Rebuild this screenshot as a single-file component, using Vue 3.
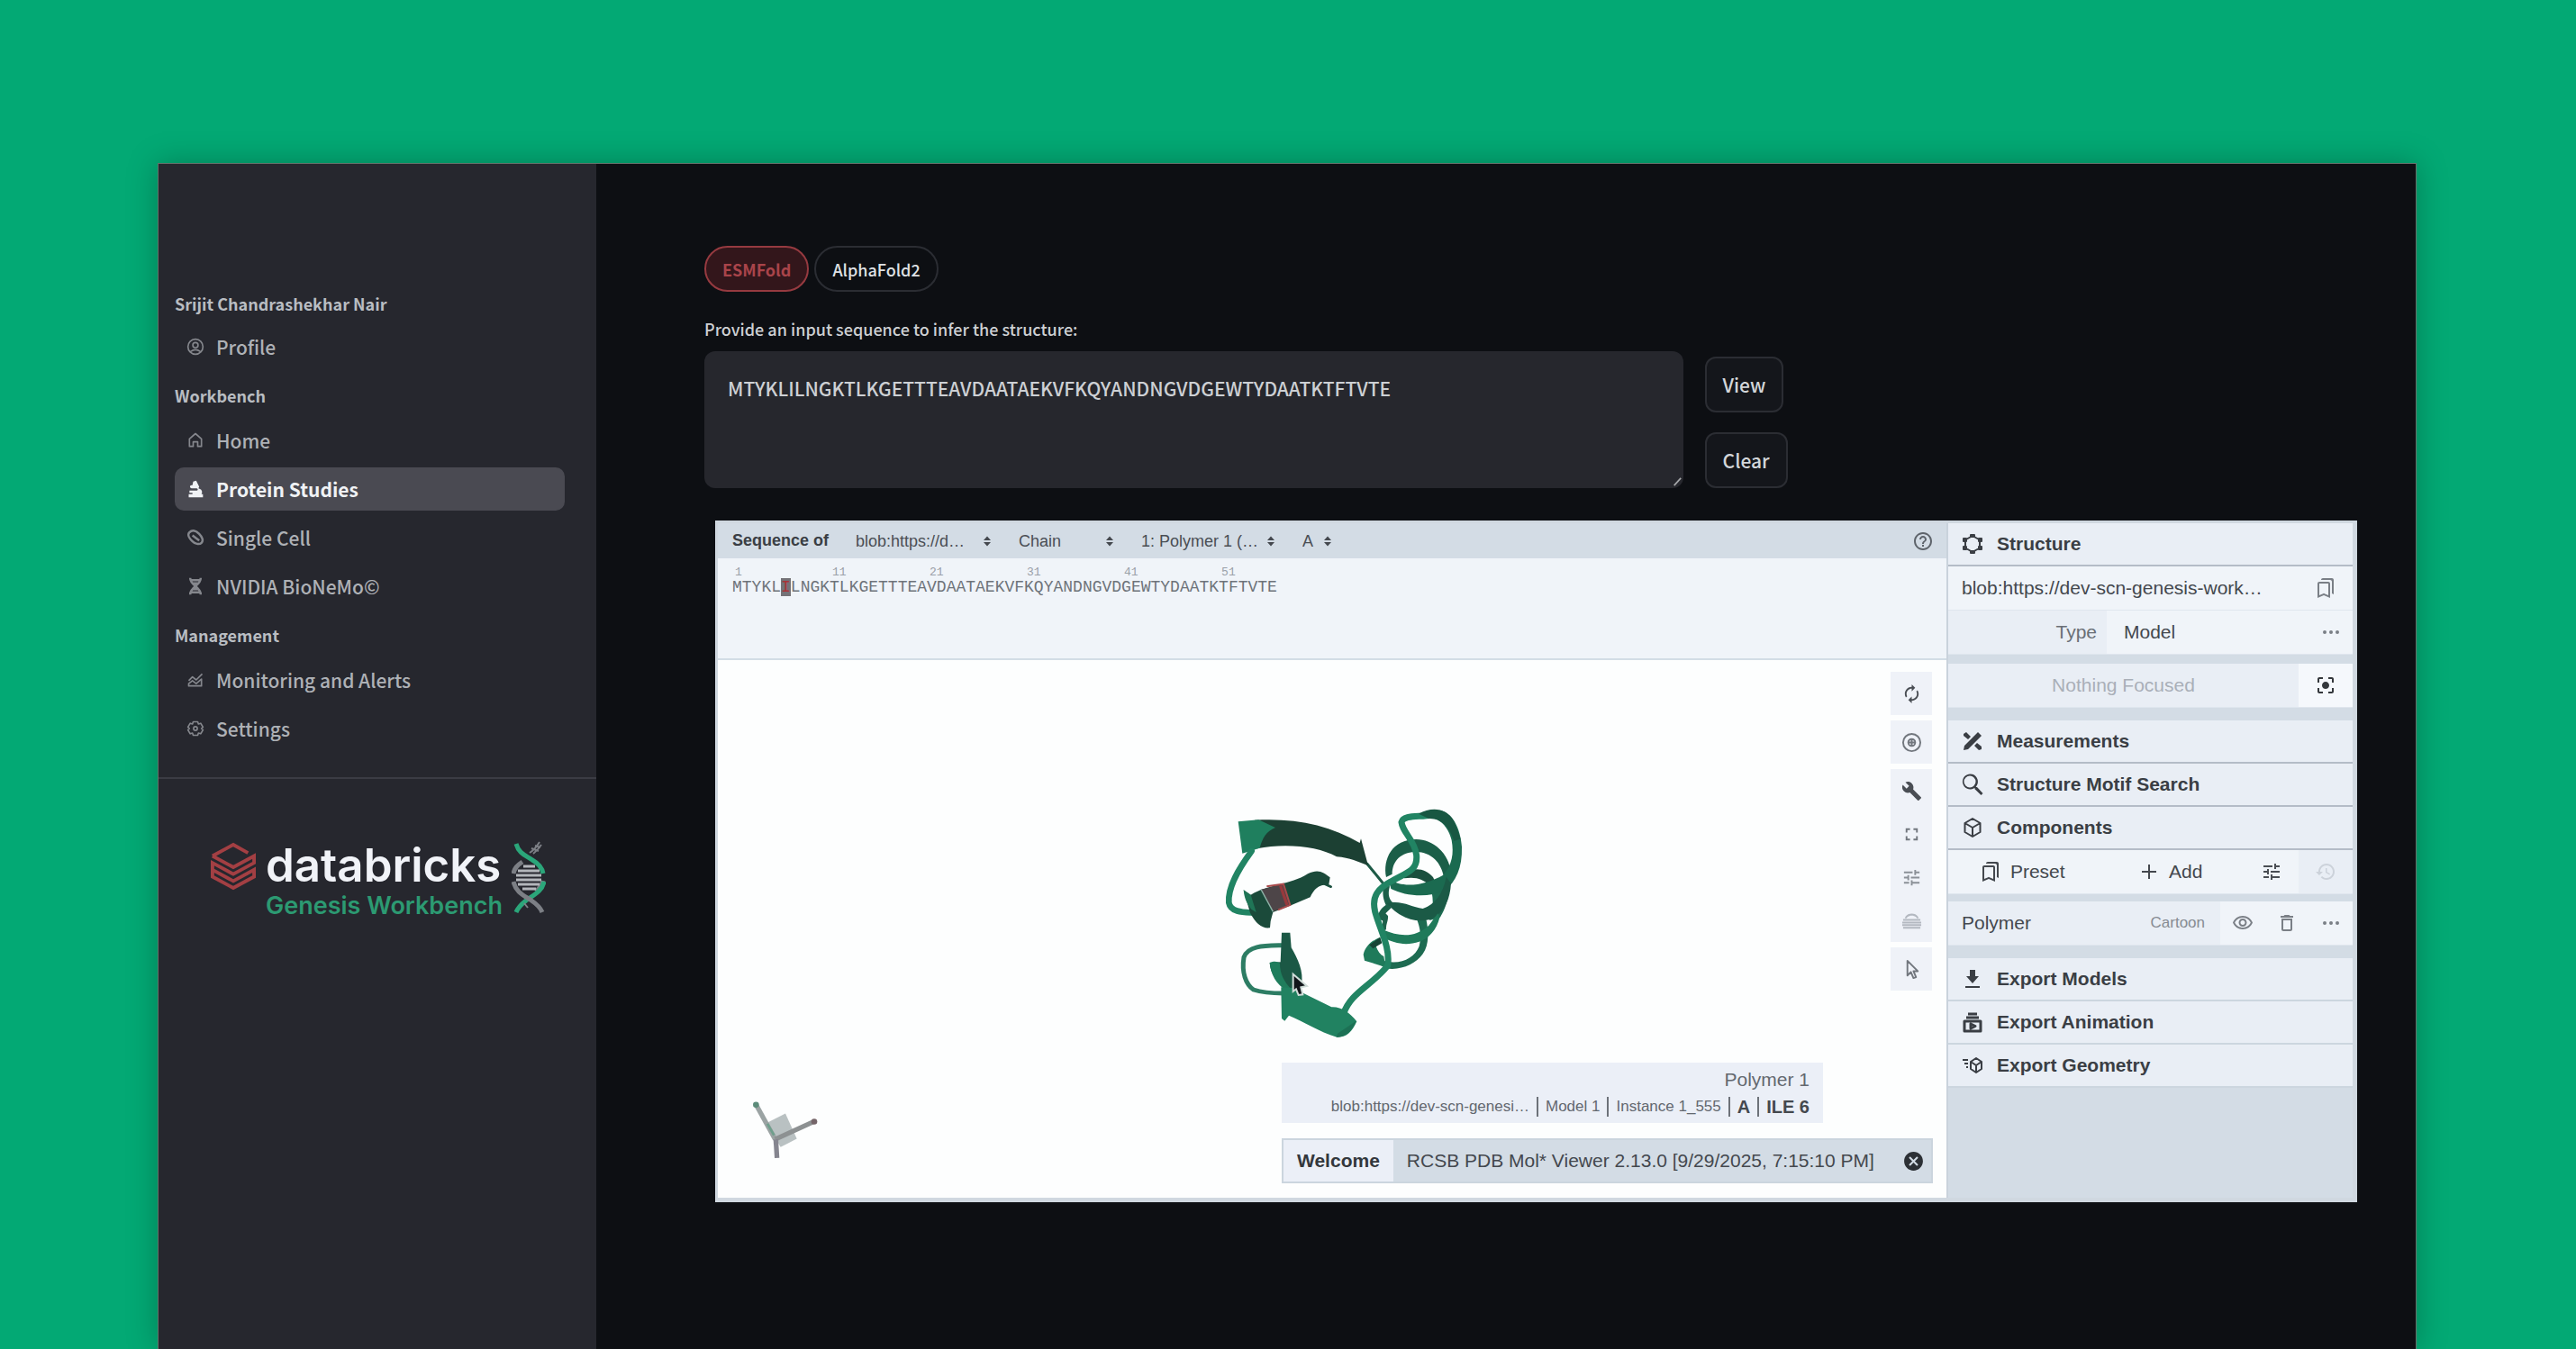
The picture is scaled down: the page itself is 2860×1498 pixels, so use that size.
<template>
    <div class="page">
        <div class="window">
            <aside class="sidebar">
                <nav>
                    <div class="group" v-for="group in menu" :key="group.title">
                        <h2>{{ group.title }}</h2>
                        <a
                            v-for="item in group.items"
                            :key="item.label"
                            href="#"
                            :class="{ active: item.label === current }"
                            @click.prevent="current = item.label"
                        >
                            <Icon :name="item.icon" class="nav-icon" />
                            {{ item.label }}
                        </a>
                    </div>
                </nav>

                <div class="brand">
                    <svg class="bricks" viewBox="0 0 52 56" aria-hidden="true">
                        <path d="M2 16 26 3l17 9.500M2 16l24 13 24-13v8L26 37 2 24v8l24 13 24-13v8L26 53 2 40v-8" />
                    </svg>
                    <div class="brand-text">
                        <span class="brand-name">databricks</span>
                        <span class="brand-sub">Genesis Workbench</span>
                    </div>
                    <svg class="dna" viewBox="0 0 38 82" aria-hidden="true">
                        <path class="gray" d="M12 24C6 28 3 31 2 37M35 45c-1 5-4 8-8 12" />
                        <path class="green" d="M5 4c3 11 11 13 18 18 7 4 11 9 12 15M36 46c-2 11-12 15-20 21-5 4-9 8-11 13" />
                        <path class="gray" d="M2 46c3 12 11 15 20 21 6 4 10 8 12 13" />
                        <path class="rungs" d="M13 29h13M7 34h24M5 39h28M5 44h28M7 49h24M12 54h15" />
                        <path class="thin" d="M20 14c5-3 8-7 11-12M24 15c4-3 7-7 9-10M22 9l8 3M26 6l6 2M14 70l4 5" />
                    </svg>
                </div>
            </aside>

            <main>
                <div class="tabs">
                    <button
                        v-for="m in models"
                        :key="m"
                        type="button"
                        :class="{ picked: m === model }"
                        @click="model = m"
                    >{{ m }}</button>
                </div>

                <label class="seq-label" for="seq">Provide an input sequence to infer the structure:</label>
                <div class="form">
                    <div class="box">
                        <textarea id="seq" v-model="sequence" spellcheck="false"></textarea>
                        <svg class="grip" viewBox="0 0 12 12" aria-hidden="true"><path d="M2 11 11 1" /></svg>
                    </div>
                    <div class="form-buttons">
                        <button type="button">View</button>
                        <button type="button" @click="sequence = ''">Clear</button>
                    </div>
                </div>

                <section class="viewer">
                    <div class="stage">
                        <div class="seq-bar">
                            <strong>Sequence of</strong>
                            <label class="pick" v-for="p in pickers" :key="p.text" :style="{ width: p.width + 'px' }">
                                <select :aria-label="p.name">
                                    <option>{{ p.text }}</option>
                                </select>
                                <Icon name="unfold" class="unfold" />
                            </label>
                            <button type="button" class="help" aria-label="Help"><Icon name="help" /></button>
                        </div>

                        <div class="residues">
                            <div class="ticks">
                                <span v-for="n in [1, 11, 21, 31, 41, 51]" :key="n"><small>{{ n }}</small></span>
                            </div>
                            <div class="letters">{{ chain.slice(0, 5) }}<mark>{{ chain[5] }}</mark>{{ chain.slice(6) }}</div>
                        </div>

                        <div class="canvas">
                            <!-- cartoon of the folded chain -->
                            <svg class="protein" viewBox="0 0 1020 960" aria-hidden="true">
                                <!-- helix, back to front -->
                                <path fill="#1a4f3e" d="M720 335c30-26 70-20 96 10l16 34-28-6c-20-22-46-30-84-24z" />
                                <path fill="#1d6b51" d="M812 395l54-26c4 40-6 80-28 112l-34 8c12-30 14-60 8-94z" />
                                <path fill="#1d6b51" d="M762 485l30-4c10 40 12 90-10 120-24 34-74 56-122 48l-24-14 6-14c60 20 112-4 128-46 8-30 4-60-8-90z" />
                                <path fill="#1c6049" d="M652 372l20 4c-8 28-2 44 14 58l-22 12c-14-22-18-46-12-74z" />
                                <path fill="#1c6049" d="M664 434c-20 12-32 30-34 50l18 6c2 10-4 22 0 34l12-4c-2-18 8-30 6-46l-8-8 20-20z" />
                                <path fill="#1b5e48" d="M660 345c-12-60 20-126 100-126 56 0 110 46 116 112l-24 14c-8-48-42-84-92-84-50 0-80 30-80 74z" />
                                <path fill="#1b6a50" d="M668 352c50 32 120 20 182-14 30-34 36-72 28-116-8-32-24-56-50-70l8-30c44 6 72 60 76 122 2 70-20 118-58 146-56 26-130 18-178-6z" />
                                <path fill="#1b5a46" d="M662 432c50-12 80 12 120 18 40-14 68-50 78-106l16 22c-4 60-26 102-70 120-54 14-106-10-144-54z" />
                                <path fill="#1f7a5a" d="M648 520c60 26 110 26 154-14l30-40 6 14c-10 40-34 68-68 80-40 14-84 8-122-16z" />
                                <path fill="#1f7a5a" d="M640 545c-24 10-48 26-56 58l4 20 70 22-6-36c-12-6-20-18-26-34z" />
                                <path fill="#164435" d="M640 545l-36 26 12 12 30-18z" />
                                <g class="cord">
                                    <path class="c-thin" stroke-width="9" d="M596 300l54 66" />
                                    <path class="c-lite" stroke-width="21" d="M518 800c24-70 92-92 147-160 10-60-26-120-42-180-12-50 8-78 60-104 50-28 82-34 78-84-6-52-46-74-50-110 6-26 60-16 100-24" />
                                </g>
                                <path fill="#185742" d="M768 134c44-24 92-20 118 24l22 60-22 6c-18-52-46-76-84-74z" />

                                <!-- strands -->
                                <path fill="#1c4033" d="M222 155c130-8 250 16 350 76l4-14 24 90c-34-14-60-26-105-30-60-34-170-46-265-27z" />
                                <path fill="#1f7f5e" d="M167 160l68-6 56 26c-30 12-44 36-52 68l-58 18z" />
                                <g class="cord">
                                    <path class="c-lite" stroke-width="20" d="M212 258c-44 60-80 120-76 172 6 34 54 32 84 34" />
                                    <path class="c-dark" stroke-width="8" d="M450 365l26 12" />
                                </g>
                                <path fill="#1b4a3a" d="M185 388l24 16c60-36 130-32 190-70 36-18 52-4 74 12l-4 24c-38 0-50 18-62 42l-62 26-62 24-8 30-2 22c-30 4-50-20-66-50z" />
                                <path fill="#1f7556" d="M185 388l24 16 18 58-16-10c-18-20-24-42-26-64z" />
                                <path fill="#4d4548" d="M243 386l76-18 22 70-58 22z" />
                                <path fill="none" stroke="#a84a4b" stroke-width="6" d="M262 376l56-8 22 70-40 16" />
                                <path fill="none" stroke="#98393c" stroke-width="10" d="M308 374l22 64" />
                                <path fill="none" stroke="#8fb3a8" stroke-width="4" d="M243 386l40 74" />

                                <g class="cord">
                                    <path class="c-loop" stroke-width="15" d="M322 572c-60 2-120-2-136 40-8 50 6 90 32 108 30 10 60 12 100 12" />
                                </g>
                                <path fill="#1b5845" d="M312 530h28l4 50c22 38 42 80 34 122l-40 16c-44-20-64-52-66-88l36-2z" />
                                <path fill="#1f7d5c" d="M272 630c16-6 26-4 34 2 0 36 14 60 36 84l-12 8c-38-22-54-56-58-94z" />
                                <path fill="#218261" d="M310 712l38 2 130 64c32-2 60 18 84 48-16 36-36 54-66 52-60-18-110-52-160-72l-14 18-10-8z" />
                                <path fill="#1c7054" d="M498 866l62-42c-16 36-36 54-66 54z" />

                                <path fill="#11151a" stroke="#cfdcd8" stroke-width="6" d="M350 668l46 40-20 4 6 24-14 2-8-20-10 8z" />
                            </svg>

                            <!-- orientation axes -->
                            <svg class="axes" viewBox="0 0 240 230" aria-hidden="true">
                                <path fill="#b9c1c2" d="M62 72l64-32 38 84-54 28z" />
                                <path stroke="#9ba3a3" d="M30 14l62 112" />
                                <path stroke="#6f9f8c" stroke-width="8" d="M66 74l22 38" />
                                <path stroke="#8d9192" d="M92 126l126-58" />
                                <path stroke="#85858f" d="M94 126l4 62" />
                                <circle fill="#5c8c7a" cx="28" cy="11" r="10" />
                                <circle fill="#756569" cx="222" cy="67" r="10" />
                            </svg>

                            <div class="tools">
                                <div class="tool-group" v-for="(set, i) in tools" :key="i">
                                    <button
                                        v-for="t in set"
                                        :key="t.icon"
                                        type="button"
                                        :class="t.tone"
                                        :aria-label="t.name"
                                    ><Icon :name="t.icon" /></button>
                                </div>
                            </div>

                            <div class="overlay">
                                <div class="info">
                                    <p>Polymer 1</p>
                                    <p class="path">
                                        <span>blob:https://dev-scn-genesi…</span><i></i>
                                        <span>Model 1</span><i></i>
                                        <span>Instance 1_555</span><i></i>
                                        <b>A</b><i></i>
                                        <b>ILE 6</b>
                                    </p>
                                </div>
                                <div class="toast">
                                    <strong>Welcome</strong>
                                    <span>RCSB PDB Mol* Viewer 2.13.0 [9/29/2025, 7:15:10 PM]</span>
                                    <button type="button" aria-label="Close"><Icon name="cancel" /></button>
                                </div>
                            </div>
                        </div>
                    </div>

                    <div class="panel">
                        <h3><Icon name="structure" />Structure</h3>
                        <div class="row light">
                            <span class="grow">blob:https://dev-scn-genesis-work…</span>
                            <button type="button" class="cell wide" aria-label="Presets"><Icon name="bookmarks" /></button>
                        </div>
                        <div class="row light">
                            <span class="type">Type</span>
                            <span class="grow">Model</span>
                            <button type="button" class="cell" aria-label="More"><Icon name="more" /></button>
                        </div>
                        <div class="row focus">
                            <span class="none">Nothing Focused</span>
                            <button type="button" class="cell wide strong" aria-label="Focus"><Icon name="focus" /></button>
                        </div>

                        <h3 class="first"><Icon name="measure" />Measurements</h3>
                        <h3><Icon name="search" />Structure Motif Search</h3>
                        <h3><Icon name="cube" />Components</h3>
                        <div class="row light actions">
                            <button type="button" class="text-button"><Icon name="bookmarks" />Preset</button>
                            <button type="button" class="text-button"><Icon name="plus" />Add</button>
                            <button type="button" class="cell wide dark" aria-label="Options"><Icon name="tune" /></button>
                            <button type="button" class="cell wide off" aria-label="Undo" disabled><Icon name="history" /></button>
                        </div>
                        <div class="row polymer">
                            <span class="grow">Polymer</span>
                            <span class="repr">Cartoon</span>
                            <button type="button" class="cell" aria-label="Hide"><Icon name="eye" /></button>
                            <button type="button" class="cell" aria-label="Remove"><Icon name="bin" /></button>
                            <button type="button" class="cell" aria-label="More"><Icon name="more" /></button>
                        </div>

                        <h3 class="first pale"><Icon name="download" />Export Models</h3>
                        <h3 class="pale"><Icon name="film" />Export Animation</h3>
                        <h3 class="pale"><Icon name="geometry" />Export Geometry</h3>
                    </div>
                </section>
            </main>
        </div>
    </div>
</template>

<script setup>
    import { ref, h } from 'vue'

    const chain = 'MTYKLILNGKTLKGETTTEAVDAATAEKVFKQYANDNGVDGEWTYDAATKTFTVTE'

    const current = ref('Protein Studies')
    const model = ref('ESMFold')
    const sequence = ref(chain)
    const models = ['ESMFold', 'AlphaFold2']

    const menu = [
        { title: 'Srijit Chandrashekhar Nair', items: [{ label: 'Profile', icon: 'user' }] },
        {
            title: 'Workbench',
            items: [
                { label: 'Home', icon: 'home' },
                { label: 'Protein Studies', icon: 'microscope' },
                { label: 'Single Cell', icon: 'cell' },
                { label: 'NVIDIA BioNeMo©', icon: 'helix' },
            ],
        },
        {
            title: 'Management',
            items: [
                { label: 'Monitoring and Alerts', icon: 'chart' },
                { label: 'Settings', icon: 'gear' },
            ],
        },
    ]

    const pickers = [
        { name: 'Structure', text: 'blob:https://d…', width: 155 },
        { name: 'Mode', text: 'Chain', width: 110 },
        { name: 'Entity', text: '1: Polymer 1 (…', width: 153 },
        { name: 'Chain', text: 'A', width: 37 },
    ]

    const tools = [
        [{ icon: 'reset', name: 'Reset camera' }],
        [{ icon: 'camera', name: 'Screenshot', tone: 'mid' }],
        [
            { icon: 'wrench', name: 'Controls' },
            { icon: 'expand', name: 'Expand', tone: 'mid' },
            { icon: 'tune', name: 'Settings', tone: 'soft' },
            { icon: 'drive', name: 'Illumination', tone: 'faint' },
        ],
        [{ icon: 'cursor', name: 'Selection mode', tone: 'mid' }],
    ]

    // "line" icons are stroked, the others are filled
    const icons = {
        user: { line: 2, d: 'M12 2a10 10 0 1 0 0 20 10 10 0 0 0 0-20M12 6.500a3.500 3.500 0 1 0 0 7 3.500 3.500 0 0 0 0-7M5.500 18.500c4-3 9-3 13 0' },
        home: { line: 2, d: 'M4 10v10h5v-6h6v6h5V10l-8-7z' },
        microscope: { d: 'M9 2l4-1 4 8-1 2c4 1 6 4 4 8h2v4H3v-4h5v-2H4v-3h10c2-1 1-3-1-3H7c-3 0-3-4 0-4h1z' },
        cell: { line: 3, d: 'M4 5c4-4 9-2 13 2s6 9 3 12-9 1-12-2-8-8-4-12M8 9l9 7' },
        helix: { line: 3, d: 'M5 1c0 11 14 11 14 22M19 1c0 11-14 11-14 22M6 4h12M8 8h8M8 16h8M6 20h12' },
        chart: { line: 2, d: 'M3 13l5-5 5 4 8-8M3 20v-3l5-4 5 4 7-6v9z' },
        gear: { line: 2, d: 'M9 3h6l1 3 3-1 3 5-2 2 2 2-3 5-3-1-1 3H9l-1-3-3 1-3-5 2-2-2-2 3-5 3 1zM12 9.500a2.500 2.500 0 1 0 0 5 2.500 2.500 0 0 0 0-5' },
        unfold: { d: 'M12 1l8 9H4zM4 14h16l-8 9z' },
        help: { d: 'M11 18h2v-2h-2v2zm1-16C6.480 2 2 6.480 2 12s4.480 10 10 10 10-4.480 10-10S17.520 2 12 2zm0 18c-4.410 0-8-3.590-8-8s3.590-8 8-8 8 3.590 8 8-3.590 8-8 8zm0-14c-2.210 0-4 1.790-4 4h2c0-1.100.9-2 2-2s2 .9 2 2c0 2-3 1.750-3 5h2c0-2.250 3-2.500 3-5 0-2.210-1.790-4-4-4z' },
        reset: { d: 'M12 6v3l4-4-4-4v3c-4.420 0-8 3.580-8 8 0 1.570.46 3.030 1.240 4.260L6.700 14.800c-.45-.83-.7-1.790-.7-2.800 0-3.310 2.690-6 6-6zm6.760 1.740L17.300 9.200c.44.84.7 1.790.7 2.800 0 3.310-2.690 6-6 6v-3l-4 4 4 4v-3c4.420 0 8-3.580 8-8 0-1.570-.46-3.030-1.240-4.260z' },
        camera: { line: 2, d: 'M12 2a10 10 0 1 0 0 20 10 10 0 0 0 0-20M12 8a4 4 0 1 0 0 8 4 4 0 0 0 0-8M12 9v6M9 12h6' },
        wrench: { d: 'M22.700 19l-9.100-9.100c.9-2.300.4-5-1.500-6.900-2-2-5-2.400-7.400-1.300L9 6 6 9 1.600 4.700C.4 7.100.9 10.100 2.900 12.100c1.900 1.900 4.600 2.400 6.900 1.500l9.100 9.100c.4.4 1 .4 1.400 0l2.300-2.300c.5-.4.5-1.100.1-1.400z' },
        expand: { d: 'M7 14H5v5h5v-2H7v-3zm-2-4h2V7h3V5H5v5zm12 7h-3v2h5v-5h-2v3zM14 5v2h3v3h2V5h-5z' },
        tune: { d: 'M3 17v2h6v-2H3zM3 5v2h10V5H3zm10 16v-2h8v-2h-8v-2h-2v6h2zM7 9v2H3v2h4v2h2V9H7zm14 4v-2H11v2h10zm-6-4h2V7h4V5h-4V3h-2v6z' },
        drive: { d: 'M4 9C6 2 18 2 20 9h-2C16 5 8 5 6 9zM2 10h20v2H2zM1 13h22v2H1zM1 16h22v2H1zM2 19h20v2H2z' },
        cursor: { line: 2, d: 'M7 2v17l4-4 3 7 3-1-3-7h5z' },
        cancel: { d: 'M12 2C6.470 2 2 6.470 2 12s4.470 10 10 10 10-4.470 10-10S17.530 2 12 2zm5 13.590L15.590 17 12 13.410 8.410 17 7 15.590 10.590 12 7 8.410 8.410 7 12 10.590 15.590 7 17 8.410 13.410 12 17 15.590z' },
        structure: { line: 2, d: 'M12 3l8 4.500v9L12 21l-8-4.500v-9zM10 2h4v2h-4zM2 6h3v3H2zM19 6h3v3h-3zM2 15h3v3H2zM19 15h3v3h-3zM10 20h4v2h-4z' },
        bookmarks: { d: 'M15 7v12.970l-4.210-1.810-.79-.34-.79.34L5 19.970V7h10m4-6H8.990C7.890 1 7 1.900 7 3h10c1.100 0 2 .9 2 2v13l2 1V3c0-1.100-.9-2-2-2zm-4 4H5c-1.100 0-2 .9-2 2v16l7-3 7 3V7c0-1.100-.9-2-2-2z' },
        more: { d: 'M5 10a2 2 0 1 0 0 4 2 2 0 0 0 0-4zm7 0a2 2 0 1 0 0 4 2 2 0 0 0 0-4zm7 0a2 2 0 1 0 0 4 2 2 0 0 0 0-4z' },
        focus: { d: 'M12 8c-2.210 0-4 1.790-4 4s1.790 4 4 4 4-1.790 4-4-1.790-4-4-4zm-7 7H3v4c0 1.100.9 2 2 2h4v-2H5v-4zM5 5h4V3H5c-1.100 0-2 .9-2 2v4h2V5zm14-2h-4v2h4v4h2V5c0-1.100-.9-2-2-2zm0 16h-4v2h4c1.100 0 2-.9 2-2v-4h-2v4z' },
        measure: { d: 'M18 2l4 4L7 21l-5 1 1-5zM2 4l3-2 5 5-3 3-5-4zM14 17l3-3 5 4v3l-3 1z' },
        search: { d: 'M17 15h-1l-.3-.3A8.500 8.500 0 1 0 14.200 16l.3.3v1l7 6.700 2-2zm-8 .5a6.500 6.500 0 1 1 0-13 6.500 6.500 0 0 1 0 13z' },
        cube: { line: 2, d: 'M12 2l8.500 5v10L12 22l-8.500-5V7zM3.500 7l8.500 5 8.500-5M12 12v10' },
        plus: { d: 'M11 4h2v7h7v2h-7v7h-2v-7H4v-2h7z' },
        history: { d: 'M13 3c-4.970 0-9 4.030-9 9H1l3.890 3.890.07.14L9 12H6c0-3.870 3.130-7 7-7s7 3.130 7 7-3.130 7-7 7c-1.930 0-3.680-.79-4.940-2.060l-1.420 1.420C8.270 19.990 10.510 21 13 21c4.970 0 9-4.030 9-9s-4.030-9-9-9zm-1 5v5l4.280 2.540.72-1.210-3.500-2.080V8H12z' },
        eye: { d: 'M12 6c3.790 0 7.170 2.130 8.820 5.500C19.170 14.870 15.790 17 12 17s-7.170-2.130-8.820-5.500C4.830 8.130 8.210 6 12 6m0-2C7 4 2.730 7.110 1 11.500 2.730 15.890 7 19 12 19s9.270-3.110 11-7.500C21.270 7.110 17 4 12 4zm0 5c1.380 0 2.500 1.120 2.500 2.500S13.380 14 12 14s-2.500-1.120-2.500-2.500S10.620 9 12 9m0-2c-2.480 0-4.500 2.020-4.500 4.500S9.520 16 12 16s4.500-2.020 4.500-4.500S14.480 7 12 7z' },
        bin: { d: 'M6 19c0 1.100.9 2 2 2h8c1.100 0 2-.9 2-2V7H6v12zM8 9h8v10H8V9zm7.500-5l-1-1h-5l-1 1H5v2h14V4h-3.500z' },
        download: { d: 'M15 9V2H9v7H5l7 8 7-8zM4 20v2h16v-2z' },
        film: { line: 3, d: 'M3 11h18v11H3zM5 7h14M7 3h10M10 14v5l5-2.500z' },
        geometry: { line: 2, d: 'M16 4l6 4v8l-6 4-6-4V8zM10 8l6 4 6-4M16 12v8M1 6h6M3 10h4M5 14h2' },
    }

    const Icon = ({ name }) => {
        const { d, line } = icons[name]
        return h('svg', { viewBox: '0 0 24 24', 'aria-hidden': 'true' }, [
            h('path', line
                ? { d, fill: 'none', stroke: 'currentColor', 'stroke-width': line, 'stroke-linejoin': 'round' }
                : { d, fill: 'currentColor' }),
        ])
    }
    Icon.props = ['name']
</script>

<style>
html, body{
    background: #03a974;
}
</style>

<style scoped>
*{
    box-sizing: border-box;
}
.page{
    min-height: 100vh;
    padding: 181px 177px 0 175px;
    background: #03a974;
    font-family: "Noto Sans CJK SC", "Noto Sans", sans-serif;
    display: flex;
    overflow: hidden;
}
.window{
    flex: 1;
    display: flex;
    border: 1px solid #65716b;
    border-bottom: none;
    background: #0d0f13;
    box-shadow: 0 0 32px rgba(0, 0, 0, 0.25);
}
button{
    font: inherit;
    color: inherit;
    border: none;
    background: none;
    padding: 0;
    cursor: pointer;
}
h2, h3, p{
    margin: 0;
}

/* sidebar */
.sidebar{
    width: 486px;
    flex: none;
    background: #26272e;
    color: #b9bcc0;
}
nav{
    padding: 131px 35px 30px 18px;
    border-bottom: 2px solid #3b3c44;
}
.group h2{
    height: 48px;
    line-height: 48px;
    font-size: 18px;
    font-weight: 700;
    color: #b9bdc2;
}
.group + .group h2{
    height: 56px;
    padding-top: 4px;
    line-height: 52px;
}
.group a{
    display: flex;
    align-items: center;
    gap: 13px;
    height: 48px;
    margin-bottom: 6px;
    padding-left: 13px;
    border-radius: 10px;
    font-size: 21px;
    font-weight: 500;
    color: #aeb1b6;
    text-decoration: none;
}
.group a:last-child{
    margin-bottom: 0;
}
.group a.active{
    background: #4a4a52;
    color: #f0f2f5;
    font-weight: 700;
}
.nav-icon{
    width: 20px;
    height: 20px;
    color: #85878d;
}
.active .nav-icon{
    color: #f0f2f5;
}
.brand{
    display: flex;
    padding: 68px 50px 0 58px;
}
.bricks{
    width: 50px;
    height: 54px;
    margin-top: 2px;
    fill: none;
    stroke: #a33f43;
    stroke-width: 4px;
    flex: none;
}
.brand-text{
    display: flex;
    flex-direction: column;
    margin: 0 10px 0 11px;
    font-family: Inter, "Liberation Sans", sans-serif;
    font-weight: 600;
    white-space: nowrap;
}
.brand-name{
    font-size: 51px;
    line-height: 56px;
    color: #f1f3f8;
}
.brand-sub{
    font-size: 27px;
    line-height: 34px;
    color: #2c9a72;
}
.dna{
    width: 38px;
    height: 82px;
    fill: none;
    stroke-width: 5px;
    flex: none;
}
.dna .green{ stroke: #2ba67a; }
.dna .gray{ stroke: #7c7f85; }
.dna .rungs{ stroke: #b3b6bb; stroke-width: 3px; }
.dna .thin{ stroke: #7c7f85; stroke-width: 2px; }

/* prediction form */
main{
    flex: 1;
    min-width: 0;
    padding: 91px 65px 0 120px;
    color: #d9dbde;
}
.tabs{
    display: flex;
    gap: 6px;
}
.tabs button{
    height: 51px;
    padding: 0 18px;
    border: 2px solid #2b2d33;
    border-radius: 26px;
    font-size: 18px;
    font-weight: 500;
    color: #dfe1e4;
}
.tabs button.picked{
    border-color: #963a40;
    background: #33161b;
    color: #a9444a;
    font-weight: 700;
}
.seq-label{
    display: block;
    margin: 28px 0 12px;
    font-size: 18px;
    line-height: 26px;
    font-weight: 500;
    color: #cdd0d3;
}
.form{
    display: grid;
    grid-template-columns: 3fr 2fr;
    gap: 24px;
    align-items: end;
}
.box{
    position: relative;
    height: 152px;
}
textarea{
    display: block;
    width: 100%;
    height: 100%;
    padding: 26px;
    border: none;
    border-radius: 12px;
    resize: none;
    outline: none;
    background: #26272d;
    color: #cdd0d4;
    font-family: inherit;
    font-size: 21px;
    font-weight: 500;
    line-height: 30px;
}
.grip{
    position: absolute;
    right: 2px;
    bottom: 2px;
    width: 10px;
    height: 10px;
    stroke: #a5a7aa;
    stroke-width: 2px;
}
.form-buttons{
    display: flex;
    flex-direction: column;
    align-items: flex-start;
    gap: 22px;
}
.form-buttons button{
    height: 62px;
    padding: 0 18px;
    border: 2px solid #2b2d33;
    border-radius: 12px;
    background: #14161b;
    font-size: 21px;
    font-weight: 500;
    color: #d3d6da;
}

/* structure viewer */
.viewer{
    display: flex;
    margin: 36px 0 0 12px;
    height: 757px;
    border: 3px solid #d0d8e0;
    border-bottom-width: 5px;
    border-right-width: 5px;
    font-family: "Liberation Sans", Arial, sans-serif;
    font-size: 21px;
    color: #44484e;
    background: #d3dce5;
}
.stage{
    flex: 1;
    min-width: 0;
    display: flex;
    flex-direction: column;
    border-right: 2px solid #c9d2dc;
}
.seq-bar{
    display: flex;
    align-items: center;
    gap: 26px;
    height: 39px;
    padding: 0 14px 0 16px;
    font-size: 18px;
}
.seq-bar strong{
    margin-right: 4px;
    color: #3a3e44;
}
.pick{
    position: relative;
    display: flex;
    align-items: center;
}
.pick select{
    appearance: none;
    width: 100%;
    border: none;
    padding: 0;
    background: transparent;
    font: inherit;
    color: #4a4e54;
    outline: none;
}
.unfold{
    position: absolute;
    right: 3px;
    width: 12px;
    height: 16px;
    pointer-events: none;
}
.help{
    margin-left: auto;
    line-height: 0;
}
.help svg{
    width: 24px;
    height: 24px;
    color: #5e646b;
}
.residues{
    height: 113px;
    padding: 7px 16px;
    background: #f0f4f9;
    border-bottom: 2px solid #d3dde6;
    font-family: "Liberation Mono", monospace;
    font-size: 18px;
    color: #6e737a;
}
.ticks{
    display: flex;
    line-height: 14px;
}
.ticks span{
    width: 10ch;
    padding-left: 3px;
}
.ticks small{
    font-size: 13px;
    color: #9aa0a8;
}
.letters{
    line-height: 18px;
}
.letters mark{
    background: #747277;
    color: #a83238;
}
.canvas{
    position: relative;
    flex: 1;
    background: #fdfefe;
}
.protein{
    position: absolute;
    left: 522px;
    top: 126px;
    width: 340px;
    height: 320px;
}
.cord path{
    fill: none;
    stroke-linecap: round;
}
.c-dark{ stroke: #1a4f3e; }
.c-lite{ stroke: #218463; }
.c-thin{ stroke: #1d5a46; }
.c-loop{ stroke: #2d7d64; }
.axes{
    position: absolute;
    left: 33px;
    bottom: 30px;
    width: 80px;
    height: 77px;
    stroke-width: 16px;
}
.tools{
    position: absolute;
    top: 13px;
    right: 16px;
    display: flex;
    flex-direction: column;
    gap: 6px;
}
.tool-group{
    display: flex;
    flex-direction: column;
    background: #eff2f8;
}
.tool-group button{
    width: 46px;
    height: 48px;
    line-height: 0;
    color: #4a4e54;
}
.tool-group svg{
    width: 23px;
    height: 23px;
}
.tool-group .mid{
    color: #72777e;
}
.tool-group .soft{
    color: #8b9097;
}
.tool-group .faint{
    color: #b3b8c0;
}
.overlay{
    position: absolute;
    right: 15px;
    bottom: 16px;
    width: 723px;
}
.info{
    margin: 0 122px 17px 0;
    height: 67px;
    padding: 4px 15px 0 0;
    background: #ebeff7;
    text-align: right;
    font-size: 21px;
    line-height: 30px;
    color: #63686f;
}
.info .path{
    display: flex;
    justify-content: flex-end;
    align-items: center;
    gap: 8px;
    font-size: 17px;
}
.path i{
    width: 2px;
    height: 22px;
    background: #6d7279;
}
.path b{
    font-size: 20px;
    color: #44484e;
}
.toast{
    display: flex;
    align-items: center;
    height: 50px;
    background: #d3dce5;
    border: 2px solid #cbd5de;
}
.toast strong{
    align-self: stretch;
    display: flex;
    align-items: center;
    padding: 0 15px;
    background: #ebeff7;
    color: #33373c;
}
.toast span{
    padding-left: 15px;
}
.toast button{
    margin-left: auto;
    padding-right: 7px;
    line-height: 0;
    color: #2c3035;
}
.toast svg{
    width: 25px;
    height: 25px;
}

/* right hand controls */
.panel{
    flex: none;
    width: 449px;
}
.panel h3{
    display: flex;
    align-items: center;
    gap: 15px;
    height: 48px;
    padding-left: 15px;
    border-bottom: 2px solid #b4bcc7;
    background: #e9eef5;
    font-size: 21px;
    color: #3a3e44;
}
.panel h3.first{
    margin-top: 14px;
}
.panel h3.pale{
    border-bottom-color: #ccd6df;
}
.panel svg{
    width: 24px;
    height: 24px;
    flex: none;
}
.row{
    display: flex;
    align-items: center;
    height: 49px;
    padding-left: 15px;
    background: #e9eef5;
    border-bottom: 1px solid #dfe6ee;
}
.row.light{
    background: #f0f4f9;
}
.row.actions{
    padding-left: 0;
}
.grow{
    flex: 1;
}
.type{
    align-self: stretch;
    width: 176px;
    margin: 0 19px 0 -15px;
    padding-right: 11px;
    line-height: 48px;
    text-align: right;
    background: #e9eef5;
    color: #6a6f76;
}
.row.focus{
    margin-top: 10px;
    padding-left: 0;
}
.none{
    flex: 1;
    text-align: center;
    color: #a9afb8;
}
.cell{
    align-self: stretch;
    display: flex;
    align-items: center;
    justify-content: center;
    width: 49px;
    background: #f0f4f9;
    color: #7a7f86;
}
.cell.wide{
    width: 60px;
}
.cell.strong{
    background: #f5f8fc;
    color: #33373c;
}
.cell.dark{
    color: #4a4e54;
}
.cell.off{
    background: #e9eef5;
    color: #ccd2da;
}
.text-button{
    flex: 1;
    display: flex;
    align-items: center;
    justify-content: center;
    gap: 10px;
    height: 100%;
}
.row.polymer{
    margin-top: 8px;
}
.repr{
    margin-right: 17px;
    font-size: 17px;
    color: #868b92;
}
</style>
